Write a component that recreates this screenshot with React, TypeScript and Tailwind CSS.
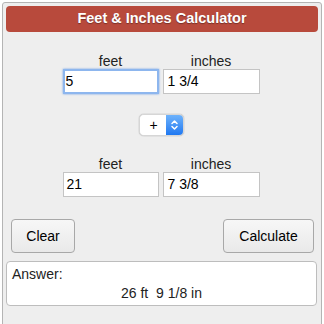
import React from "react";

export default function App() {
  const font = { fontFamily: '"Liberation Sans", Arial, sans-serif' };
  return (
    <div className="w-[324px] h-[324px] overflow-hidden bg-white" style={font}>
      <div className="ml-[2px] mt-[2px] w-[320px] h-[340px] border border-[#b4b4b4] rounded-[3px] bg-[#eeeeee] p-[3px]">
        <div className="h-[26px] rounded-[4px] bg-[#b84a3c] flex items-center justify-center text-white font-bold text-[14.5px] [text-shadow:0_1px_1px_rgba(0,0,0,0.35)]">
          Feet &amp; Inches Calculator
        </div>

        <div className="mt-[21px] flex justify-center gap-[4px] pr-[2px]">
          <div className="w-[96px] flex flex-col items-center">
            <div className="h-[16px] leading-[16px] text-[14px] text-[#222]">feet</div>
            <div className="w-[96px] h-[25px] bg-white border-2 border-[#8db6ee] shadow-[0_0_2px_#6e9fe6] flex items-center px-[1px] text-[14px] text-black">5</div>
          </div>
          <div className="w-[97px] flex flex-col items-center">
            <div className="h-[16px] leading-[16px] text-[14px] text-[#222]">inches</div>
            <div className="w-[97px] h-[25px] bg-white border border-[#c4c4c4] flex items-center px-[4px] text-[14px] text-black">1 3/4</div>
          </div>
        </div>

        <div className="mt-[20px] flex justify-center pr-[1px]">
          <div className="w-[45px] h-[22px] rounded-[5px] flex overflow-hidden shadow-[0_0_1px_rgba(0,0,0,0.5)] border border-[#d6d6d6]">
            <div className="flex-1 bg-white flex items-center justify-center text-[14px] text-black pl-[1px]">+</div>
            <div className="w-[17px] bg-gradient-to-b from-[#6db2fb] to-[#1e78f1] flex items-center justify-center">
              <svg width="9" height="14" viewBox="0 0 9 14" fill="none" stroke="white" strokeWidth="1.5" strokeLinecap="round" strokeLinejoin="round">
                <path d="M2 5.5 L4.5 3 L7 5.5" />
                <path d="M2 8.5 L4.5 11 L7 8.5" />
              </svg>
            </div>
          </div>
        </div>

        <div className="mt-[20px] flex justify-center gap-[4px] pr-[2px]">
          <div className="w-[96px] flex flex-col items-center">
            <div className="h-[16px] leading-[16px] text-[14px] text-[#222]">feet</div>
            <div className="w-[96px] h-[25px] bg-white border border-[#c4c4c4] flex items-center px-[3px] text-[14px] text-black">21</div>
          </div>
          <div className="w-[97px] flex flex-col items-center">
            <div className="h-[16px] leading-[16px] text-[14px] text-[#222]">inches</div>
            <div className="w-[97px] h-[25px] bg-white border border-[#c4c4c4] flex items-center px-[4px] text-[14px] text-black">7 3/8</div>
          </div>
        </div>

        <div className="mt-[22px] flex justify-between pl-[5px] pr-[4px]">
          <div className="w-[64px] h-[34px] rounded-[4px] border border-[#a8a8a8] bg-gradient-to-b from-[#f7f7f7] to-[#e9e9e9] flex items-center justify-center text-[14px] text-black">Clear</div>
          <div className="w-[91px] h-[34px] rounded-[4px] border border-[#a8a8a8] bg-gradient-to-b from-[#f7f7f7] to-[#e9e9e9] flex items-center justify-center text-[14px] text-black">Calculate</div>
        </div>

        <div className="mt-[8px] mr-[1px] h-[45px] rounded-[4px] border border-[#bdbdbd] bg-white px-[5px] pt-[4px] text-[14px] text-[#222]">
          <div className="h-[16px] leading-[16px]">Answer:</div>
          <div className="h-[16px] leading-[16px] mt-[3px] text-center whitespace-pre">26 ft  9 1/8 in</div>
        </div>
      </div>
    </div>
  );
}
